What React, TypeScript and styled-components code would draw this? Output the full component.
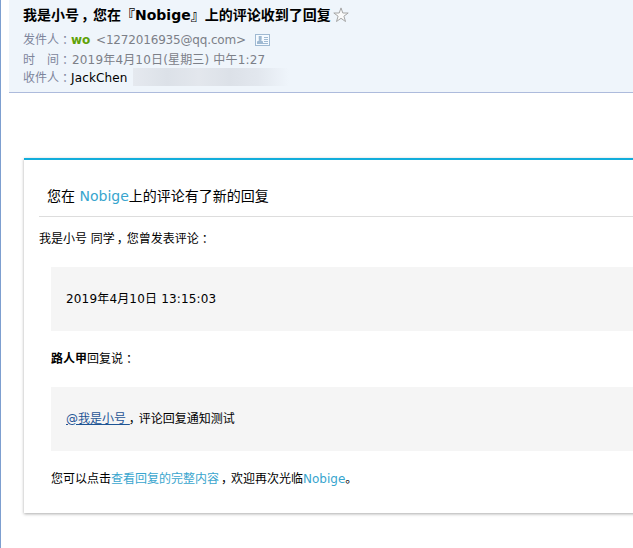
import React from 'react';
import styled, { createGlobalStyle } from 'styled-components';

const GlobalStyle = createGlobalStyle`
  * { box-sizing: border-box; }
  body {
    margin: 0;
    overflow: hidden;
    background: #fff;
    color: #000;
    font: 12px/20px "DejaVu Sans", "Noto Sans CJK SC", sans-serif;
    white-space: nowrap;
  }
`;

const Page = styled.main`
  height: 548px;
  border-left: 1px solid #7d9fd0;
`;

const MailHeader = styled.header`
  height: 93px;
  margin-left: 8px;
  padding: 5px 0 0 14px;
  background: #eff5fb;
  border-bottom: 1px solid #adbbdc;
`;

const Subject = styled.h1`
  display: flex;
  align-items: center;
  height: 20px;
  margin: 0;
  font-size: 14px;
  line-height: 20px;
`;

const MetaRow = styled.div<{ $height: number }>`
  display: flex;
  align-items: center;
  height: ${(p) => p.$height}px;
  color: #7c8088;
`;

const Label = styled.span`
  flex: none;
  width: 48px;
  color: #7e859c;
`;

const Sender = styled.b`
  width: 25px;
  color: #5fa207;
`;

const Address = styled.span`
  letter-spacing: -0.17px;
`;

const DateText = styled.span<{ $indent?: number }>`
  margin-left: ${(p) => p.$indent ?? 0}px;
  letter-spacing: 0.17px;
`;

const Recipient = styled.span`
  color: #000;
  letter-spacing: 0.15px;
`;

const Redacted = styled.span`
  width: 156px;
  height: 18px;
  margin: -3px 0 0 5px;
  background: linear-gradient(90deg, #e5e9ef 0, #dce1e8 22%, #e3e7ed 42%, #dce1e8 62%, #e2e7ee 80%, #eff5fb 100%);
`;

const Punct = styled.span<{ $pull?: number }>`
  display: inline-block;
  width: 1em;
  margin-left: ${(p) => -(p.$pull ?? 0)}px;
  text-indent: 2px;
  letter-spacing: -2px;
  font-family: "Noto Sans CJK SC", sans-serif;
  line-height: 1;
`;

const ColonMark = styled.span`
  display: inline-block;
  width: 1em;
  font-family: "Noto Sans CJK JP", sans-serif;
  line-height: 1;
  vertical-align: -1px;
`;

const Card = styled.article`
  height: 355px;
  margin: 65px -10px 0 23px;
  padding: 0 0 0 15px;
  border-top: 2px solid #12addb;
  box-shadow: 0 1px 3px #aaa;
`;

const CardTitle = styled.h2`
  height: 57px;
  margin: 0;
  padding: 26px 0 0 8px;
  border-bottom: 1px solid #ddd;
  font-size: 14px;
  font-weight: 400;
  line-height: 20px;
`;

const Greeting = styled.p`
  height: 20px;
  margin: 12px 0 18px;
`;

const Body = styled.section`
  padding-left: 12px;
`;

const Line = styled.p`
  height: 20px;
  margin: 18px 0;
`;

const Quote = styled.blockquote`
  height: 64px;
  margin: 0;
  padding: 22px 15px;
  background: #f5f5f5;
`;

const Brand = styled.a`
  color: #38a5ce;
`;

const Mention = styled.a`
  color: #1e5494;
  text-decoration: underline;
  white-space: pre;
`;

const Star = styled.svg`
  margin-left: 2px;
`;

const CardIcon = styled.svg`
  margin-left: 9px;
`;

const Comma = ({ pull }: { pull?: number }) => <Punct $pull={pull}>，</Punct>;
const Colon = () => <ColonMark>：</ColonMark>;

export default function App() {
  return (
    <Page>
      <GlobalStyle />
      <MailHeader>
        <Subject>
          <span>我是小号<Comma />您在『Nobige』上的评论收到了回复</span>
          <Star width="16" height="16" viewBox="0 0 16 16" fill="#fafafa" stroke="#a5a5a5">
            <path d="M8 .9 9.8 6H15.2L10.9 9.2 12.5 14.5 8 11.3 3.5 14.5 5.1 9.2.8 6H6.2Z" />
          </Star>
        </Subject>
        <MetaRow $height={29}>
          <Label>发件人<Colon /></Label>
          <Sender>wo</Sender>
          <Address>&lt;1272016935@qq.com&gt;</Address>
          <CardIcon width="15" height="12" viewBox="0 0 15 12" fill="none" stroke="#9fb9d2">
            <rect x=".5" y=".5" width="14" height="11" fill="#f5faff" />
            <path d="M9 3.5H13M9 5.5H13M9 7.5H13M2 9.5H13" />
            <path d="M3.7 2H6.7V5.5L6 6.3 8 7.5V9H2V7.5L4.3 6.3 3.7 5.5Z" fill="#9fb9d2" stroke="none" />
          </CardIcon>
        </MetaRow>
        <MetaRow $height={11}>
          <Label>时　间<Colon /></Label>
          <DateText $indent={1}>2019年4月10日(星期三) 中午1:27</DateText>
        </MetaRow>
        <MetaRow $height={26}>
          <Label>收件人<Colon /></Label>
          <Recipient>JackChen</Recipient>
          <Redacted />
        </MetaRow>
      </MailHeader>
      <Card>
        <CardTitle>您在 <Brand>Nobige</Brand>上的评论有了新的回复</CardTitle>
        <Greeting>我是小号 同学<Comma />您曾发表评论<Colon /></Greeting>
        <Body>
          <Quote><DateText>2019年4月10日 13:15:03</DateText></Quote>
          <Line><b>路人甲</b>回复说<Colon /></Line>
          <Quote><Mention>@我是小号 </Mention><Comma pull={3} />评论回复通知测试</Quote>
          <Line>您可以点击<Brand>查看回复的完整内容</Brand><Comma />欢迎再次光临<Brand>Nobige</Brand>。</Line>
        </Body>
      </Card>
    </Page>
  );
}
